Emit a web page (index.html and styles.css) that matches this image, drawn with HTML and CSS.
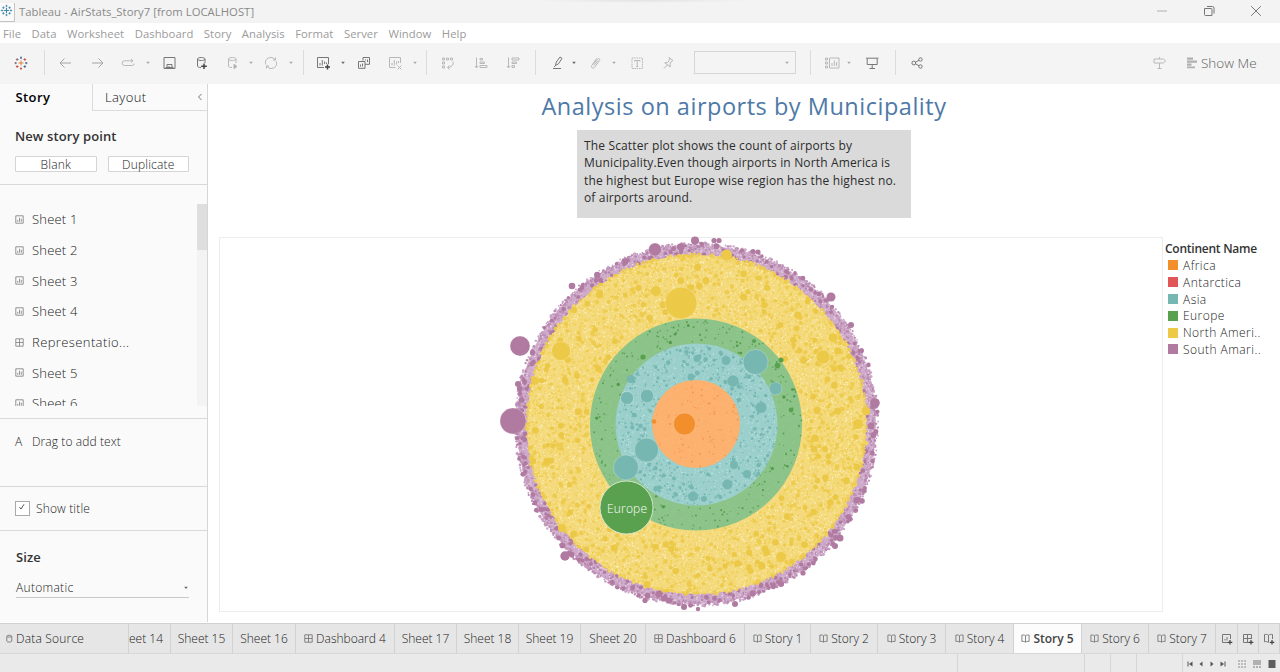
FILE: index.html
```html
<!DOCTYPE html>
<html lang="en">
<head>
<meta charset="utf-8">
<title>Tableau - AirStats_Story7</title>
<link rel="stylesheet" href="styles.css">
</head>
<body>
<svg class="defs" width="0" height="0">
  <symbol id="logo" viewBox="0 0 16 16"><path d="M8 5v6M5 8h6" stroke-width="1.4"/><path d="M8 1v3M6.700 2.500h2.600M8 12v3M6.700 13.500h2.600M1 8h3M2.500 6.700v2.600M12 8h3M13.500 6.700v2.600M4.200 3v3M2.700 4.500h3M11.800 3v3M10.300 4.500h3M4.200 10v3M2.700 11.500h3M11.800 10v3M10.300 11.500h3"/></symbol>
  <symbol id="caret" viewBox="0 0 6 4"><path d="M1.200 .8h3.600L3 3z" fill="currentColor" stroke="none"/></symbol>
  <symbol id="sheet" viewBox="0 0 10 10"><path d="M.9.9h8.200v8.200H.9zM3 7.500V5.500M5 7.500V3M7 7.500V4.200"/></symbol>
  <symbol id="dash" viewBox="0 0 10 10"><path d="M.9.9h8.200v8.200H.9zM5 1v8M1 5h8"/></symbol>
  <symbol id="book" viewBox="0 0 10 10"><path d="M5 2C4 1 2.500 1 1 1.200V8.300C2.500 8 4 8.200 5 9C6 8.200 7.500 8 9 8.300V1.200C7.500 1 6 1 5 2zM5 2v7"/></symbol>
</svg>

<header class="titlebar">
  <div class="app"><svg class="app-logo"><use href="#logo"/></svg></div>
  <span class="app-title">Tableau - AirStats_Story7 [from LOCALHOST]</span>
  <svg class="win" viewBox="0 0 12 12"><path d="M1 6h10"/></svg>
  <svg class="win dark" viewBox="0 0 12 12"><path d="M1.500 3.500h6.500a1 1 0 0 1 1 1V10.500h-6.500a1 1 0 0 1-1-1zM4 1.500h5.500a1.500 1.500 0 0 1 1.500 1.500V8.500"/></svg>
  <svg class="win dark" viewBox="0 0 12 12"><path d="M1.200 1.200l9.600 9.600M10.800 1.200L1.200 10.800"/></svg>
</header>

<nav class="menu">
  <span>File</span><span>Data</span><span>Worksheet</span><span>Dashboard</span><span>Story</span><span>Analysis</span><span>Format</span><span>Server</span><span>Window</span><span>Help</span>
</nav>

<div class="toolbar">
  <svg class="ico start" viewBox="0 0 16 16"><path stroke="#d7803a" d="M8 5.500v5M5.500 8h5"/><path stroke="#4e6a91" d="M8 1.500v2.600M7 2.800h2M13.200 7v2.200M12 8h2.500M10.500 11.500h2.600M11.800 10.300v2.600"/><path stroke="#c9514c" d="M11.800 3.200v2.600M10.500 4.500h2.600M4.200 10.300v2.600M2.900 11.500h2.600M8 12.300v2.500M7 13.500h2"/><path stroke="#8b6a7c" d="M4.200 3.200v2.600M2.900 4.500h2.600M2.600 7v2.200M1.500 8h2.500"/></svg>
  <i class="sep"></i>
  <svg class="ico mid" viewBox="0 0 16 16"><path d="M14 8H3M7.500 3.500L3 8l4.500 4.500"/></svg>
  <svg class="ico mid" viewBox="0 0 16 16"><path d="M3 8h11M9.500 3.500L14 8l-4.500 4.500"/></svg>
  <svg class="ico" viewBox="0 0 16 16"><path d="M9.500 10.500H4.500a2.300 2.300 0 0 1 0-4.700H13M11 4l2 1.800-2 1.800M9 10.500h3.200a1.800 1.800 0 0 0 1.800-2"/></svg>
  <svg class="car"><use href="#caret"/></svg>
  <svg class="ico dark" viewBox="0 0 16 16"><path d="M3 2.500h11v11h-11zM6 13v-3.500h5V13M4.500 12.500h8M8 11v2"/></svg>
  <svg class="ico dark" viewBox="0 0 16 16"><path d="M12 8V4M4.500 4v7c0 .8 1 1.500 3.500 1.500M4.500 4c0-2 7.500-2 7.500 0S4.500 6 4.500 4z"/><path class="plus" d="M11 8.500v5.500M8.200 11.300h5.600"/></svg>
  <svg class="ico" viewBox="0 0 16 16"><path d="M12 8V4M4.500 4v7c0 .8 1 1.500 3.500 1.500M4.500 4c0-2 7.500-2 7.500 0S4.500 6 4.500 4z"/><path fill="#aaa" d="M10 9.200v4.600l3-2.300z"/></svg>
  <svg class="car"><use href="#caret"/></svg>
  <svg class="ico" viewBox="0 0 16 16"><path d="M2.800 9.500A5.300 5.300 0 0 1 12 4.500M13.200 6.500A5.300 5.300 0 0 1 4 11.500M12.500 2.500v2.600H10M3.500 13.500v-2.600H6"/></svg>
  <svg class="car"><use href="#caret"/></svg>
  <i class="sep"></i>
  <svg class="ico dark" viewBox="0 0 16 16"><path d="M9 12.500H2.500v-10h11V9M5 10.500V8M7.300 10.500V5M9.600 9V6.500M11.500 9V7.500"/><path class="plus" d="M12.500 9.500v5M10 12h5"/></svg>
  <svg class="car dk"><use href="#caret"/></svg>
  <svg class="ico dark" viewBox="0 0 16 16"><path d="M7 5.500V2.500h6.500v6.800H9M2.500 6.500H9v6.800H2.500zM4.500 11.500v-2M6.500 11.500v-3M9.500 5.500v-1M11.500 7V4.500"/></svg>
  <svg class="ico" viewBox="0 0 16 16"><path d="M8.500 12.500H2.500v-10h11V8M5 10.500V8M7.300 10.500V5M9.600 9.500V6.500M11.500 8V6M10.500 10.500l4 4M14.500 10.500l-4 4"/></svg>
  <svg class="car"><use href="#caret"/></svg>
  <i class="sep"></i>
  <svg class="ico" viewBox="0 0 16 16"><path d="M2.500 3h2v2h-2zM6.500 3h2v2h-2zM10.500 3h2v2h-2zM2.500 7h2v2h-2zM2.500 11h2v2h-2zM13 6.500C14 10 11 12.500 7.500 12.500M9.500 10.500l-2 2 2 2"/></svg>
  <svg class="ico" viewBox="0 0 16 16"><path d="M3.500 2.500v10M1.800 11l1.700 1.800L5.200 11M7 3.500h2.500v1.500H7zM7 7h4.500v1.500H7zM7 10.500h7v2H7z"/></svg>
  <svg class="ico" viewBox="0 0 16 16"><path d="M3.500 2.500v10M1.800 11l1.700 1.800L5.200 11M7 3h7v2H7zM7 7h4.500v1.500H7zM7 10.500h2.500v2H7z"/></svg>
  <i class="sep"></i>
  <svg class="ico dark" viewBox="0 0 16 16"><path d="M5.500 10.500l.8-3.500L10 2l2 1.300L8.500 8.800zM3 13.500h8M5.500 10.500l-1.500 1.500"/></svg>
  <svg class="car dk"><use href="#caret"/></svg>
  <svg class="ico" viewBox="0 0 16 16"><path d="M5 9.500l4.500-5.500c1-1.300 3 0 2 1.500L6.500 12.500c-1.200 1.500-4 .2-2.700-2L8.500 3.500M6 10.500l4-5"/></svg>
  <svg class="car"><use href="#caret"/></svg>
  <svg class="ico" viewBox="0 0 16 16"><path stroke-dasharray="1.500 .8" d="M3 3h10.500v10.500H3z"/><path d="M5.500 6.500v-1h5.500v1M8.200 5.500v6M7.200 11.500h2"/></svg>
  <svg class="ico" viewBox="0 0 16 16"><path d="M9 2.500l4 3-1.500.7-1.500 2.800.3 3L4.800 7.800l3-.3L9.500 4.700zM7.300 10L4 13.500"/></svg>
  <div class="combo"><svg class="car"><use href="#caret"/></svg></div>
  <i class="sep"></i>
  <svg class="ico" viewBox="0 0 16 16"><path d="M5.500 3H15v10H5.500zM8 11V8M10.300 11V5.500M12.600 11V7M1.500 3h2v2h-2zM1.500 7h2v2h-2zM1.500 11h2v2h-2z"/></svg>
  <svg class="car"><use href="#caret"/></svg>
  <svg class="ico dark" viewBox="0 0 16 16"><path d="M2 3.200h12.500M3.200 3.500v6h10v-6M8.200 9.500v4.200M5.500 13.500h5.500"/></svg>
  <i class="sep"></i>
  <svg class="ico dark" viewBox="0 0 16 16"><circle cx="4.800" cy="8" r="1.900"/><circle cx="11.500" cy="4.500" r="1.700"/><circle cx="11.500" cy="11.500" r="1.700"/><path d="M6.500 7.200L10 5.300M6.500 8.800l3.500 2"/></svg>
  <svg class="ico" viewBox="0 0 16 16"><path d="M3 4h9.500l2 2-2 2H3zM8.500 2v2M8.500 8v5.500M6.500 13.500h4"/></svg>
  <div class="showme"><svg viewBox="0 0 12 12"><path fill="#b0b0b0" stroke="none" d="M1 .5h6v2.200H1zM1 3.500h10v2.200H1zM1 6.500h4.500v2.200H1zM1 9.500h8v1.800H1z"/></svg><span>Show Me</span></div>
</div>

<main class="body">
  <aside class="side">
    <div class="tabs"><b>Story</b><div class="layout"><span>Layout</span><svg viewBox="0 0 6 8"><path d="M4.500 1L1.500 4l3 3"/></svg></div></div>
    <section class="new">
      <h2>New story point</h2>
      <div class="btns"><button>Blank</button><button>Duplicate</button></div>
    </section>
    <section class="sheets">
      <ul>
        <li><svg><use href="#sheet"/></svg><span>Sheet 1</span></li>
        <li><svg><use href="#sheet"/></svg><span>Sheet 2</span></li>
        <li><svg><use href="#sheet"/></svg><span>Sheet 3</span></li>
        <li><svg><use href="#sheet"/></svg><span>Sheet 4</span></li>
        <li><svg><use href="#dash"/></svg><span class="rep">Representatio...</span></li>
        <li><svg><use href="#sheet"/></svg><span>Sheet 5</span></li>
        <li><svg><use href="#sheet"/></svg><span>Sheet 6</span></li>
      </ul>
      <div class="track"><div class="thumb"></div></div>
    </section>
    <section class="drag"><span class="a">A</span><span class="dtext">Drag to add text</span></section>
    <section class="show"><div class="check"><svg viewBox="0 0 8 8"><path d="M1.500 4.200L3 6 6 1.300"/></svg></div><span>Show title</span></section>
    <section class="size"><h2>Size</h2><div class="select"><span>Automatic</span><svg class="car dk"><use href="#caret"/></svg></div></section>
  </aside>

  <div class="story">
    <h1><span>Analysis on airports by Municipality</span></h1>
    <p class="caption"><span>The Scatter plot shows the count of airports by</span><br><span>Municipality.Even though airports in North America is</span><br><span>the highest but Europe wise region has the highest no.</span><br><span>of airports around.</span></p>
    <div class="view">
      <div class="chart"><svg id="bubbles" viewBox="220 238 942 373"></svg></div>
      <div class="legend">
        <b>Continent Name</b>
        <div><i class="africa"></i><span>Africa</span></div>
        <div><i class="antarctica"></i><span>Antarctica</span></div>
        <div><i class="asia"></i><span>Asia</span></div>
        <div><i class="europe"></i><span>Europe</span></div>
        <div><i class="north"></i><span>North Ameri..</span></div>
        <div><i class="south"></i><span>South Amari..</span></div>
      </div>
    </div>
  </div>
</main>

<footer>
  <div class="sheetbar">
    <div class="source"><svg viewBox="0 0 10 10"><path d="M2 2.500v5.500c0 1.300 5.500 1.300 5.500 0V2.500C7.500 1 2 1 2 2.500c0 1.300 5.500 1.300 5.500 0"/></svg><span>Data Source</span></div>
    <div class="cut"><span>eet 14</span></div>
    <div><span>Sheet 15</span></div>
    <div><span>Sheet 16</span></div>
    <div><svg><use href="#dash"/></svg><span>Dashboard 4</span></div>
    <div><span>Sheet 17</span></div>
    <div><span>Sheet 18</span></div>
    <div><span>Sheet 19</span></div>
    <div><span>Sheet 20</span></div>
    <div><svg><use href="#dash"/></svg><span>Dashboard 6</span></div>
    <div><svg><use href="#book"/></svg><span>Story 1</span></div>
    <div><svg><use href="#book"/></svg><span>Story 2</span></div>
    <div><svg><use href="#book"/></svg><span>Story 3</span></div>
    <div><svg><use href="#book"/></svg><span>Story 4</span></div>
    <div class="active"><svg><use href="#book"/></svg><span>Story 5</span></div>
    <div><svg><use href="#book"/></svg><span>Story 6</span></div>
    <div><svg><use href="#book"/></svg><span>Story 7</span></div>
    <div class="add"><svg viewBox="0 0 12 12"><path d="M7 9.500H1.500v-8h8V6M4 7.500V6M6 7.500V4"/><path class="plus" d="M9 7v4.500M6.800 9.300h4.500"/></svg></div>
    <div class="add"><svg viewBox="0 0 12 12"><path d="M7 9.500H1.500v-8h8V6M5.500 1.500v8M1.500 5.500h8"/><path class="plus" d="M9 7v4.500M6.800 9.300h4.500"/></svg></div>
    <div class="add"><svg viewBox="0 0 12 12"><path d="M5.500 9.500C4.500 8.500 3 8.500 1.500 8.700V1.500c1.500-.2 3-.2 4 .8 1-1 2.500-1 4-.8V6M5.500 2.300v7"/><path class="plus" d="M9 7v4.500M6.800 9.300h4.500"/></svg></div>
  </div>
  <div class="status">
    <i></i><i></i><i></i><i></i><i></i>
    <div class="nav">
      <svg viewBox="0 0 6 8"><path d="M1 1.500v5"/><path class="f" d="M5.500 1.500v5L2 4z"/></svg>
      <svg viewBox="0 0 6 8"><path class="f" d="M4.500 1.500v5L1.500 4z"/></svg>
      <svg viewBox="0 0 6 8"><path class="f" d="M1.500 1.500v5L4.500 4z"/></svg>
      <svg viewBox="0 0 6 8"><path d="M5 1.500v5"/><path class="f" d="M.5 1.500v5L4 4z"/></svg>
    </div>
    <div class="modes">
      <svg viewBox="0 0 8 8"><path fill="#bbb" d="M0 0h2v2H0zM3 0h2v2H3zM6 0h2v2H6zM0 3h2v2H0zM3 3h2v2H3zM6 3h2v2H6zM0 6h2v2H0zM3 6h2v2H3zM6 6h2v2H6z"/></svg>
      <svg viewBox="0 0 8 8"><path fill="#b0b0b0" d="M0 0h8v5H0zM0 6h2v2H0zM3 6h2v2H3zM6 6h2v2H6z"/></svg>
      <svg viewBox="0 0 8 8"><path fill="#5c5c5c" d="M.500 0h7v8h-7z"/></svg>
    </div>
  </div>
</footer>
<script src="bubbles.js"></script>
</body>
</html>
```
FILE: styles.css
```css
* { box-sizing: border-box; }
body { margin: 0; width: 1280px; height: 672px; overflow: hidden; display: flex; flex-direction: column; background: #fff; font-family: "Open Sans", sans-serif; font-size: 12px; font-weight: 300; color: #444; }
svg { display: block; fill: none; stroke: currentColor; flex: none; }
.defs { position: absolute; }
h1, h2, p, ul { margin: 0; padding: 0; font-weight: 300; }
span { white-space: nowrap; }

.titlebar { height: 23px; flex: none; background: radial-gradient(ellipse 112px 3px at 643px 0, #e2e2e2, #f3f3f3); display: flex; align-items: center; color: #8a8a8a; font-size: 11.300px; font-weight: 400; padding-bottom: 2px; letter-spacing: .03px; }
.app { width: 15px; height: 19px; margin-top: 4px; border-right: 1px solid #c4c4c4; border-bottom: 1px solid #c4c4c4; background: #fafafa; }
.app-logo { width: 13px; height: 13px; color: #3f88a8; margin-top: 1px; }
.app-title { margin: 1px auto 0 4px; }
.win { width: 12px; height: 12px; margin: 1px 35px 0 0; color: #b0b0b0; }
.win.dark { color: #777; }
.win:last-child { margin-right: 18px; }

.menu { height: 20px; flex: none; display: flex; gap: 10.500px; padding-left: 3px; line-height: 21px; color: #9b9b9b; font-size: 11.300px; font-weight: 400; letter-spacing: .04px; }

.toolbar { height: 41px; flex: none; background: #f4f4f4; padding: 0 0 2px 13px; display: grid; align-items: center; grid-template-columns: 31px 13px 32px 31px 25px 16px 32px 31px 24px 15px 25px 15px 12px 25px 16px 31px 25px 14px 14px 33px 32px 30px 15px 21px 17px 23px 18px 31px 34px 116px 14px 22px 18px 31px 14px 242px 35px 94px; }
.ico { width: 16px; height: 16px; color: #b8b8b8; }
.ico.mid { color: #a4a4a4; }
.ico.dark { color: #777; }
.plus { stroke: #444; stroke-width: 1.500; }
.car { width: 6px; height: 4px; color: #aaa; }
.car.dk { color: #666; }
.sep { width: 1px; height: 25px; background: #dcdcdc; }
.combo { width: 102px; height: 23px; border: 1px solid #d5d5d5; display: flex; align-items: center; justify-content: flex-end; padding-right: 5px; }
.showme { display: flex; align-items: center; gap: 3px; color: #606060; font-size: 13.500px; }
.showme svg { width: 12px; height: 12px; }

.body { height: 538px; flex: none; display: flex; }
.side { width: 208px; flex: none; background: #fafafa; border-right: 1px solid #d6d6d6; display: flex; flex-direction: column; color: #222; }
.side section { border-bottom: 1px solid #d9d9d9; flex: none; }
.side .size { border: 0; }
.tabs { height: 27px; display: flex; font-size: 13px; line-height: 26px; color: #111; letter-spacing: .4px; }
.tabs b { width: 92px; padding-left: 15.500px; color: #000; font-weight: 600; }
.layout { flex: 1; display: flex; align-items: center; justify-content: space-between; border-left: 1px solid #dcdcdc; border-bottom: 1px solid #dcdcdc; padding: 0 4px 0 12px; }
.layout svg { width: 6px; height: 8px; color: #777; }
.new { height: 74px; padding: 16px 18px 0 15px; }
h2 { font-size: 13px; line-height: 18px; font-weight: 600; color: #333; letter-spacing: .1px; }
.btns { display: flex; gap: 11px; margin-top: 11px; }
button { width: 82px; height: 16px; border: 1px solid #d4d4d4; border-radius: 1px; background: #fff; padding: 0; font: 300 12px/13px "Open Sans", sans-serif; color: #222; letter-spacing: .2px; }
.sheets { height: 234px; display: flex; justify-content: space-between; padding-top: 19px; }
ul { list-style: none; height: 202px; overflow: hidden; padding-left: 15px; }
li { height: 30.700px; display: flex; align-items: center; gap: 8px; font-size: 13px; letter-spacing: .2px; }
li svg { width: 9px; height: 9px; color: #888; }
.rep { letter-spacing: .4px; }
.track { width: 10px; height: 202px; background: #f3f3f3; }
.thumb { height: 46px; background: #dedede; }
.drag { height: 68px; padding: 14px 0 0 15px; display: flex; line-height: 18px; letter-spacing: .1px; }
.a { width: 17px; }
.show { height: 44px; display: flex; align-items: center; gap: 6px; padding-left: 15px; letter-spacing: .15px; }
.check { width: 15px; height: 15px; border: 1px solid #aaa; background: #fff; }
.check svg { width: 8px; height: 8px; margin: 1px 0 0 2px; stroke: #555; }
.size { padding: 17px 18px 0 16px; }
.select { height: 20px; margin-top: 12px; border-bottom: 1px solid #c8c8c8; display: flex; align-items: center; justify-content: space-between; letter-spacing: .3px; }

.story { flex: 1; display: flex; flex-direction: column; }
h1 { font-size: 23.500px; line-height: 30px; height: 46px; padding-top: 7px; text-align: center; color: #4e79a7; font-weight: 400; letter-spacing: .52px; }
.caption { width: 334px; height: 88px; margin-left: 369px; padding: 7px; background: #dadada; color: #2c2c2c; font-size: 12px; font-weight: 400; line-height: 17.300px; letter-spacing: .15px; }
.view { display: flex; margin: 19px 0 0 11px; }
.chart { width: 944px; height: 375px; border: 1px solid #ececec; }
.chart svg { width: 942px; height: 373px; overflow: visible; stroke: none; }
.legend { margin: 3px 0 0 2px; font-size: 12px; color: #222; letter-spacing: .45px; }
.legend b { display: block; font-weight: 600; color: #333; line-height: 17px; height: 17px; white-space: nowrap; letter-spacing: -.25px; }
.legend div { display: flex; align-items: center; gap: 5px; height: 16.800px; padding-left: 3px; }
.legend i { width: 10px; height: 10px; }
.africa { background: #f28e2b; } .antarctica { background: #e15759; } .asia { background: #76b7b2; }
.europe { background: #59a14f; } .north { background: #edc948; } .south { background: #b07aa1; }
.label { font: 300 12px "Open Sans", sans-serif; fill: #fff; }

.sheetbar { height: 31px; border-top: 1px solid #d0d0d0; background: #e6e6e6; display: grid; grid-template-columns: 129px 42px 62px 63px 99px 62px 62px 62px 65px 99px 66px 67px 68px 68px 68px 67px 67px 22px 21px 21px; margin-top: 1px; }
.sheetbar div { display: flex; align-items: center; justify-content: center; gap: 3px; border-right: 1px solid #d2d2d2; border-bottom: 1px solid #d8d8d8; color: #222; overflow: hidden; }
.sheetbar svg { width: 9px; height: 9px; color: #777; }
.sheetbar .source { justify-content: flex-start; padding-left: 5px; gap: 2px; letter-spacing: .2px; }
.sheetbar .cut { justify-content: flex-start; }
.sheetbar .active { background: #fcfcfc; font-weight: 600; color: #444; }
.sheetbar .add svg { width: 12px; height: 12px; }
.sheetbar .plus { stroke-width: 1.200; }
.status { height: 19px; background: #eaeaea; display: grid; grid-template-columns: 958px 127px 26px 26px 46px 55px 42px; }
.status i { border-right: 1px solid #d6d6d6; }
.nav { display: flex; align-items: center; gap: 5px; color: #555; padding-left: 4px; }
.nav svg { width: 6px; height: 8px; }
.f { fill: #555; stroke: none; }
.modes { display: flex; align-items: center; gap: 7px; }
.modes svg { width: 8px; height: 8px; stroke: none; }
```
FILE: bubbles.js
```js
const svg = document.getElementById('bubbles');
let seed = 20231;
const rnd = () => { seed = (seed * 1664525 + 1013904223) >>> 0; return seed / 4294967296; };
const parts = [];
const circle = (x, y, r, fill, extra = '') => parts.push(`<circle cx="${x.toFixed(1)}" cy="${y.toFixed(1)}" r="${r.toFixed(2)}" fill="${fill}"${extra}/>`);
const CX = 696.5, CY = 424.5;
const scatter = (n, r0, r1, size, color) => {
  for (let i = 0; i < n; i++) {
    const a = rnd() * Math.PI * 2, d = Math.sqrt(r0 * r0 + rnd() * (r1 * r1 - r0 * r0));
    const c = Array.isArray(color) ? color[Math.floor(rnd() * color.length)] : color;
    circle(CX + d * Math.cos(a), CY + d * Math.sin(a), size(), c);
  }
};
const between = (a, b) => () => a + rnd() * (b - a);
// South America
circle(CX, CY, 179.5, '#cfabcb');
scatter(1000, 177, 182, between(.8, 1.500), ['#c79cc1', '#b98bb0', '#cfabcb']);
scatter(1300, 169, 180, between(.4, .7), '#ecdcea');
scatter(1300, 169, 181, between(.6, 1.200), ['#bd8cb4', '#b583aa', '#c59bc0']);
scatter(200, 170, 181, between(1.500, 2.500), '#b07aa1');
scatter(40, 176, 182, between(2, 3.200), '#b07aa1');
// North America
circle(CX, CY, 169.5, '#f4da7c');
scatter(500, 167.5, 171, between(.8, 1.800), ['#f0d260', '#edc948']);
scatter(5500, 107, 169, between(.35, .7), '#fcf1c8');
scatter(4800, 107, 170, between(.6, 1.200), ['#f0d15c', '#f3d76e', '#eecd52']);
scatter(420, 108, 169, between(1.400, 2.300), '#edcb4e');
scatter(130, 110, 168, between(2.300, 3.600), '#ebc846');
// Europe
circle(CX - .5, CY, 106, '#8bc389');
scatter(1300, 82, 105, between(.25, .5), '#a3d0a1');
scatter(240, 82, 105, between(.5, 1.100), '#59a14f');
scatter(15, 84, 103, between(1.200, 1.700), '#4f9a48');
// Asia
circle(CX, CY, 81, '#9bcfcb');
scatter(1300, 45, 80.500, between(.3, .6), '#c6e6e3');
scatter(460, 45, 80.500, between(.5, 1.200), '#76b7b2');
scatter(70, 47, 79, between(1.300, 2.300), '#76b7b2');
// Africa
circle(CX - .5, CY - .5, 44, '#fcb16e');
scatter(350, 0, 43, between(.25, .45), '#fdc798');
scatter(80, 0, 43, between(.5, 1), '#f0964a');

const big = {
  '#b07aa1': [[520, 346, 10], [513, 421, 13], [655, 249.500, 6.500], [695, 240.500, 4], [714, 240.500, 2.600], [719, 240.500, 2.600], [572, 286, 3.300], [831, 297, 4.500], [875, 403, 4.800], [565, 556, 4.700], [840, 538, 3.500], [835, 546, 3], [781, 584, 3], [803, 573, 2.600], [698, 609, 2.200], [735, 604, 3], [684, 607, 3], [659, 594, 3.500], [645, 600.500, 2.600], [851, 325, 3], [518, 384, 3], [862, 501, 2.800], [758, 252, 2.600], [681, 247, 3.500], [871, 426, 3.500]],
  '#edc948': [[681, 303, 16], [561, 351, 9.500], [823, 357, 7], [726.500, 255, 5.500], [656, 291, 5], [833, 337.500, 4.500], [866, 411, 4.200], [858, 424, 5], [781, 557, 5], [535, 381, 4], [562, 528, 4]],
  '#59a14f': [[777.500, 365.500, 2.800], [781, 360, 2.500], [791, 410, 2.400], [643, 357, 2.600], [754, 341, 2]],
  '#76b7b2': [[755.500, 362, 12.500], [775.500, 388.500, 6.500], [733, 381, 5.700], [726, 360.500, 4.500], [697, 358.500, 3.500], [691, 377, 3.500], [647, 396, 6.700], [627, 398, 6.500], [631, 379, 4], [646.500, 450, 12], [626, 467.500, 12.500], [761, 407.500, 5.500], [693, 496.500, 5], [727.500, 484.500, 5], [747, 474, 4], [734, 465, 4], [704, 499, 3]],
  '#f28e2b': [[684.500, 424, 11], [654, 421.500, 2.300]]
};
for (const [fill, list] of Object.entries(big))
  for (const [x, y, r] of list) circle(x, y, r, fill, r > 6 ? ' stroke="#fff" stroke-opacity=".4" stroke-width=".6"' : '');
circle(626.500, 507.500, 26.500, '#59a14f', ' stroke="#e8f3e6" stroke-width=".8"');
parts.push('<text class="label" x="607" y="513" textLength="40">Europe</text>');
svg.innerHTML = parts.join('');
```
